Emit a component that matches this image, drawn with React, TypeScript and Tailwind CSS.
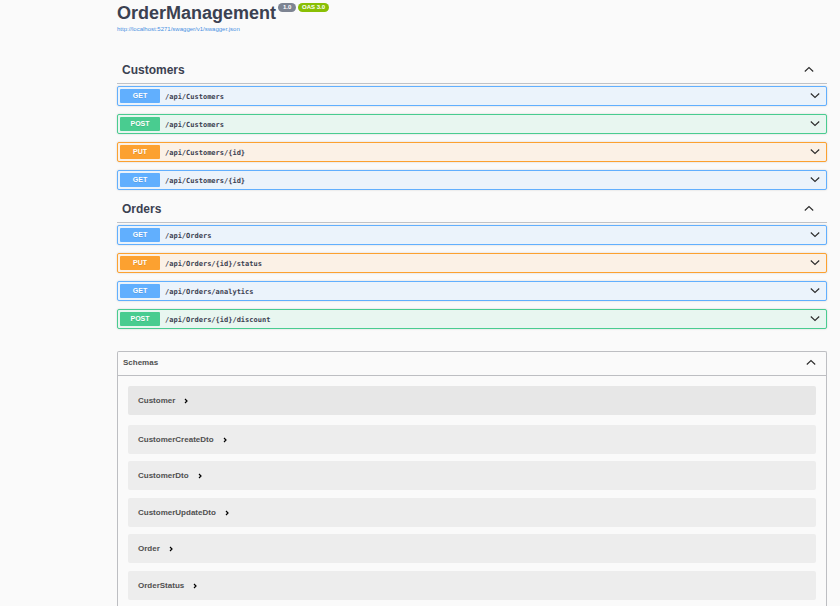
import React from "react";

type Method = "GET" | "POST" | "PUT";

const rowStyles: Record<Method, string> = {
  GET: "border-[#61affe] bg-[#ebf3fb]",
  POST: "border-[#49cc90] bg-[#e8f6f0]",
  PUT: "border-[#fca130] bg-[#fbf1e6]",
};

const badgeStyles: Record<Method, string> = {
  GET: "bg-[#61affe]",
  POST: "bg-[#49cc90]",
  PUT: "bg-[#fca130]",
};

const groups: { name: string; operations: [Method, string][] }[] = [
  {
    name: "Customers",
    operations: [
      ["GET", "/api/Customers"],
      ["POST", "/api/Customers"],
      ["PUT", "/api/Customers/{id}"],
      ["GET", "/api/Customers/{id}"],
    ],
  },
  {
    name: "Orders",
    operations: [
      ["GET", "/api/Orders"],
      ["PUT", "/api/Orders/{id}/status"],
      ["GET", "/api/Orders/analytics"],
      ["POST", "/api/Orders/{id}/discount"],
    ],
  },
];

const schemas = [
  "Customer",
  "CustomerCreateDto",
  "CustomerDto",
  "CustomerUpdateDto",
  "Order",
  "OrderStatus",
];

function Chevron({ up = false }: { up?: boolean }) {
  return (
    <svg
      viewBox="0 0 10 10"
      className="size-[10px] shrink-0"
      fill="none"
      stroke="#2b2b2b"
      strokeWidth="1.1"
      aria-hidden="true"
    >
      <path d={up ? "M.8 6.5 5 2.5l4.2 4" : "M.8 2.5l4.2 4 4.2-4"} />
    </svg>
  );
}

function Operation({ method, path }: { method: Method; path: string }) {
  return (
    <button
      type="button"
      className={`flex h-5 w-full items-center rounded-xs border pr-[6px] pl-[2px] text-left shadow-[0_0_2px_rgba(0,0,0,0.19)] ${rowStyles[method]}`}
    >
      <span
        className={`flex h-[14px] w-10 items-center justify-center rounded-[1px] pt-px text-[7px] font-bold text-white [text-shadow:0_1px_0_rgba(0,0,0,0.1)] ${badgeStyles[method]}`}
      >
        {method}
      </span>
      <span className="ml-[5px] flex-1 pt-px font-['DejaVu_Sans_Mono',monospace] text-[7px] leading-3 font-bold">
        {path}
      </span>
      <Chevron />
    </button>
  );
}

export default function App() {
  return (
    <div className="flex min-h-screen flex-col bg-[#fafafa] pr-[13px] pl-[117px] font-['Liberation_Sans',Arial,sans-serif] text-[#3b4151]">
      <header className="h-[51px]">
        <div className="flex items-start gap-[2px]">
          <h1 className="pt-px text-lg leading-6 font-bold">OrderManagement</h1>
          <span className="mt-[3px] flex h-[9px] w-[18px] items-center justify-center rounded-full bg-[#7d8492] text-[6px] font-bold text-white">
            1.0
          </span>
          <span className="mt-[3px] flex h-[9px] w-[31px] items-center justify-center rounded-full bg-[#89bf04] text-[6px] font-bold whitespace-nowrap text-white">
            OAS 3.0
          </span>
        </div>
        <a
          href="#swagger"
          className="block w-fit text-[6px] leading-2 text-[#4990e2]"
        >
          http://localhost:5271/swagger/v1/swagger.json
        </a>
      </header>

      <main className="flex flex-1 flex-col">
        {groups.map((group) => (
          <section key={group.name}>
            <h2 className="mb-[2px] border-b border-[#c0c2c7]">
              <button
                type="button"
                className="flex h-8 w-full items-center justify-between pt-[5px] pr-[13px] pl-[5px] text-xs font-bold"
              >
                {group.name}
                <Chevron up />
              </button>
            </h2>
            <div className="flex flex-col gap-2">
              {group.operations.map(([method, path]) => (
                <Operation key={method + path} method={method} path={path} />
              ))}
            </div>
          </section>
        ))}

        <section className="mt-[22px] flex-1 rounded-t-xs border border-b-0 border-[#bdbec2]">
          <h2 className="border-b border-[#bdbec2]">
            <button
              type="button"
              className="flex h-[23px] w-full items-center justify-between pr-[10px] pb-px pl-[5px] text-[8px] font-bold text-[#505050]"
            >
              Schemas
              <Chevron up />
            </button>
          </h2>
          <ul className="px-[10px] pt-[10px]">
            {schemas.map((name) => (
              <li
                key={name}
                className="mb-[7px] rounded-xs bg-[#ededed] not-first:odd:mb-2 first:mb-[10px] first:bg-[#e7e7e7] last:mb-0"
              >
                <button
                  type="button"
                  className="flex h-[29px] items-center gap-[9px] pl-[10px] text-[8px] font-bold text-[#505050]"
                >
                  {name}
                  <svg
                    viewBox="0 0 4 6"
                    className="mt-px h-[6px] w-1"
                    fill="none"
                    stroke="#000"
                    strokeWidth="1.2"
                    aria-hidden="true"
                  >
                    <path d="M1 1l2 2-2 2" />
                  </svg>
                </button>
              </li>
            ))}
          </ul>
        </section>
      </main>
    </div>
  );
}
